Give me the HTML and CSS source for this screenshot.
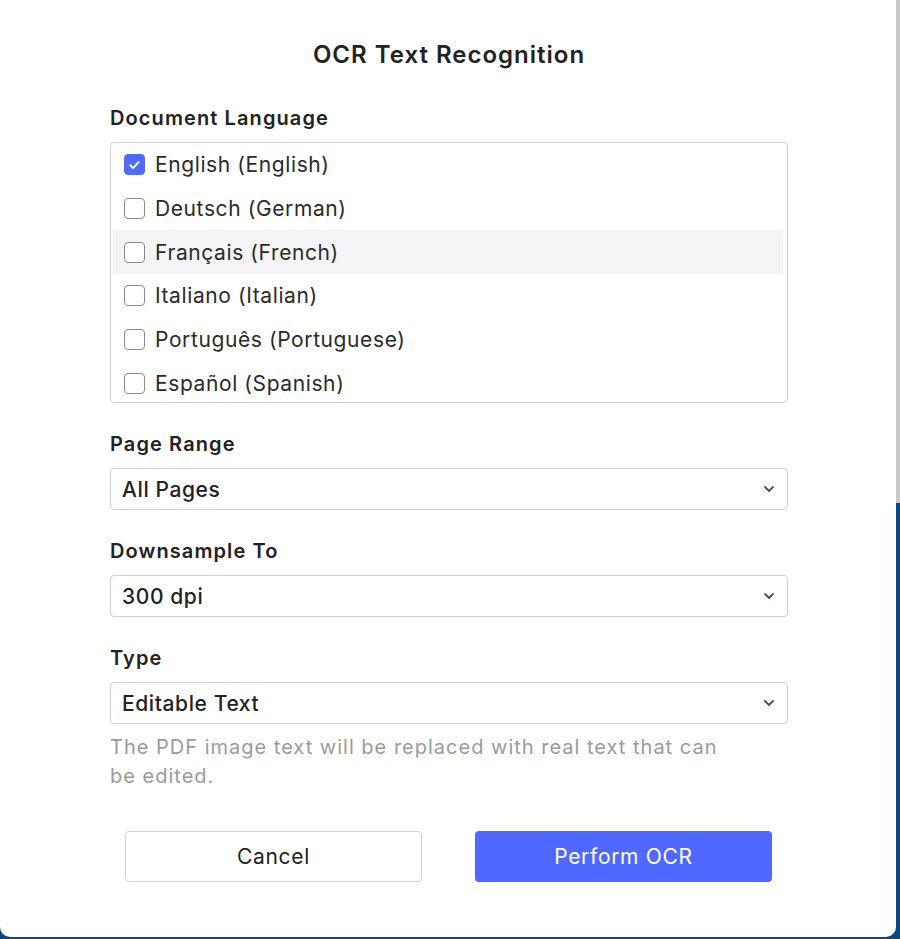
FILE: index.html
```html
<!DOCTYPE html>
<html lang="en">

<head>
    <meta charset="UTF-8">
    <meta name="viewport" content="width=device-width, initial-scale=1.0">
    <title>OCR Text Recognition</title>
    <link rel="stylesheet" href="styles.css">
</head>

<body>

    <div class="dialog">
        <h1 class="dialog-title">OCR Text Recognition</h1>

        <!-- Language list -->
        <div class="field">
            <label class="field-label">Document Language</label>
            <div class="lang-list">
                <label class="lang-row">
                    <span class="check checked">
                        <svg viewBox="0 0 20 20" width="20" height="20"><path d="M5.5 10.2l3 3 6-6.4" fill="none" stroke="#fff" stroke-width="2" stroke-linecap="round" stroke-linejoin="round"/></svg>
                    </span>
                    English (English)
                </label>
                <label class="lang-row"><span class="check"></span>Deutsch (German)</label>
                <label class="lang-row hover"><span class="check"></span>Français (French)</label>
                <label class="lang-row"><span class="check"></span>Italiano (Italian)</label>
                <label class="lang-row"><span class="check"></span>Português (Portuguese)</label>
                <label class="lang-row"><span class="check"></span>Español (Spanish)</label>
            </div>
        </div>

        <div class="field">
            <label class="field-label">Page Range</label>
            <div class="select">
                <span>All Pages</span>
                <svg class="chevron" viewBox="0 0 12 8" width="12" height="8"><path d="M2 2l4 4 4-4" fill="none" stroke="#4b5168" stroke-width="1.8" stroke-linecap="round" stroke-linejoin="round"/></svg>
            </div>
        </div>

        <div class="field">
            <label class="field-label">Downsample To</label>
            <div class="select">
                <span>300 dpi</span>
                <svg class="chevron" viewBox="0 0 12 8" width="12" height="8"><path d="M2 2l4 4 4-4" fill="none" stroke="#4b5168" stroke-width="1.8" stroke-linecap="round" stroke-linejoin="round"/></svg>
            </div>
        </div>

        <div class="field">
            <label class="field-label">Type</label>
            <div class="select">
                <span>Editable Text</span>
                <svg class="chevron" viewBox="0 0 12 8" width="12" height="8"><path d="M2 2l4 4 4-4" fill="none" stroke="#4b5168" stroke-width="1.8" stroke-linecap="round" stroke-linejoin="round"/></svg>
            </div>
            <p class="hint">The PDF image text will be replaced with real text that can be edited.</p>
        </div>

        <div class="actions">
            <button class="btn btn-cancel">Cancel</button>
            <button class="btn btn-primary">Perform OCR</button>
        </div>
    </div>

</body>

</html>
```

FILE: styles.css
```css
* {
    margin: 0;
    padding: 0;
    box-sizing: border-box;
}

body {
    font-family: Inter, 'Noto Sans', sans-serif;
    background: linear-gradient(to bottom, #c9c9c9 0, #c9c9c9 503px, #0c467a 503px, #0c467a 100%);
    min-height: 100vh;
    color: #222;
}

.dialog {
    width: 896px;
    height: 937px;
    background: #fff;
    border-radius: 0 0 10px 10px;
    padding: 40px 108px 0 110px;
}

.dialog-title {
    text-align: center;
    font-size: 24px;
    font-weight: 600;
    line-height: 30px;
    color: #222;
    margin-bottom: 36px;
    letter-spacing: 1px;
}

.field {
    margin-bottom: 29px;
}

.field-label {
    display: block;
    font-size: 20px;
    font-weight: 600;
    line-height: 24px;
    margin-bottom: 12px;
    color: #222;
    letter-spacing: 1.1px;
}

.lang-list {
    height: 261px;
    overflow: hidden;
    border: 1px solid #cfcfd3;
    border-radius: 4px;
}

.lang-row {
    display: flex;
    align-items: center;
    height: 43.7px;
    padding-left: 13px;
    gap: 10px;
    font-size: 21px;
    color: #2a2a2a;
    letter-spacing: 0.6px;
}

.lang-row.hover {
    background: #f4f4f6;
    margin: 0 4px 0 2px;
    padding-left: 11px;
}

.check {
    width: 21px;
    height: 21px;
    flex: none;
    border: 1px solid #8a8a8e;
    border-radius: 4px;
    background: #fff;
    display: flex;
    align-items: center;
    justify-content: center;
}

.check.checked {
    background: #4f6bff;
    border-color: #4f6bff;
}

.select {
    display: flex;
    align-items: center;
    justify-content: space-between;
    height: 42px;
    padding: 0 12px 0 11px;
    border: 1px solid #cfcfd3;
    border-radius: 4px;
    font-size: 21px;
    font-weight: 500;
    color: #222;
    letter-spacing: 0.6px;
}

.hint {
    margin-top: 9px;
    font-size: 20px;
    line-height: 29px;
    color: #9b9b9b;
    width: 630px;
    letter-spacing: 1px;
}

.actions {
    display: flex;
    justify-content: space-between;
    padding: 0 16px 0 15px;
    margin-top: 40px;
}

.btn {
    width: 297px;
    height: 51px;
    font-family: inherit;
    font-size: 21px;
    border-radius: 4px;
    cursor: pointer;
    letter-spacing: 0.7px;
}

.btn-cancel {
    background: #fff;
    border: 1px solid #d3d3d6;
    color: #222;
}

.btn-primary {
    background: #5068ff;
    border: none;
    color: #fff;
}
```
